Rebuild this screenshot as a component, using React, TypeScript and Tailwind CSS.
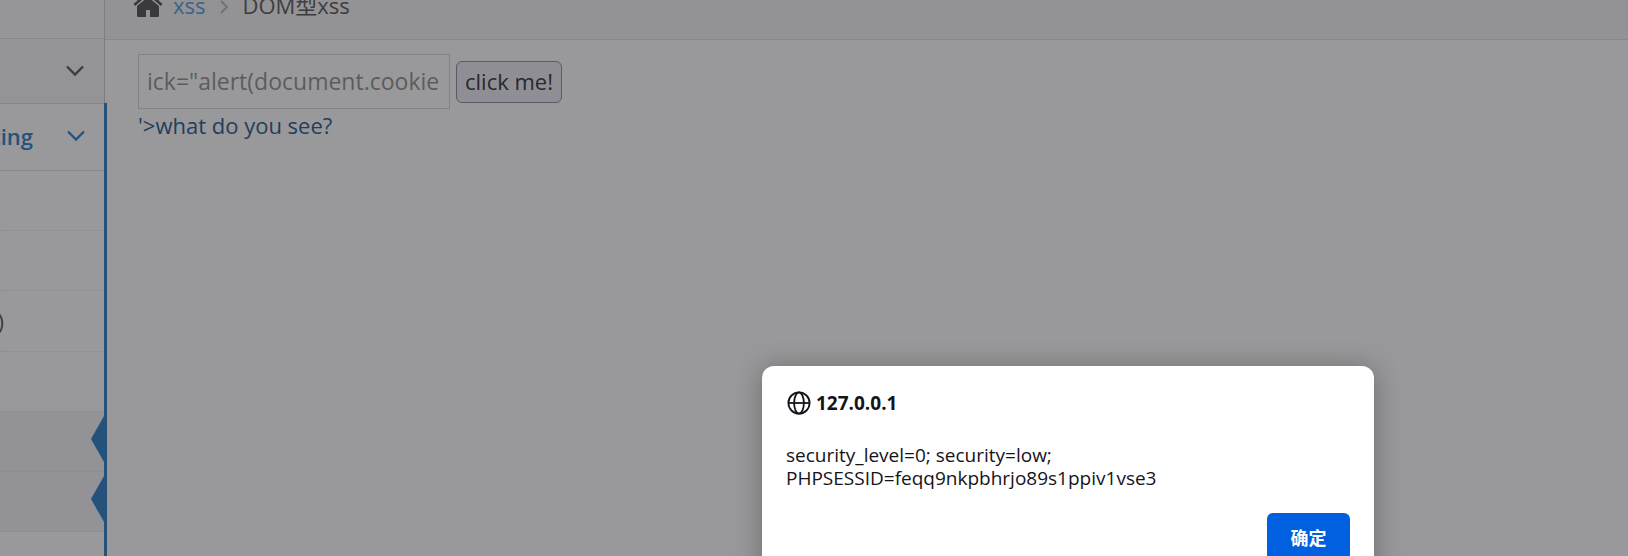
import React from "react";

function Chevron({ className }: { className: string }) {
  return (
    <svg viewBox="0 0 18 12" className={`h-3 w-[18px] shrink-0 ${className}`} fill="none" aria-hidden="true">
      <path d="M1 1.500 9 9.500 17 1.500" stroke="currentColor" strokeWidth="2.3" />
    </svg>
  );
}

function HomeIcon() {
  return (
    <svg viewBox="0 0 30 26" className="h-[26px] w-[30px] shrink-0" fill="#3a3a3c" aria-hidden="true">
      <path d="M15 0 21 5.200V2h4v6.800L29.500 13 28 15 15 4 2 15 .5 13Z" />
      <path d="M15 6 26 15v9.500a1.500 1.500 0 0 1-1.500 1.500H17v-7h-4v7H5.500A1.500 1.500 0 0 1 4 24.500V15Z" />
    </svg>
  );
}

function GlobeIcon() {
  return (
    <svg viewBox="0 0 24 24" className="size-6 shrink-0" fill="none" stroke="#15141a" strokeWidth="1.8" aria-hidden="true">
      <circle cx="12" cy="12" r="10.600" />
      <path d="M1.500 12h21" />
      <ellipse cx="12" cy="12" rx="4.900" ry="10.600" />
    </svg>
  );
}

const subItems = [
  { label: "", active: false },
  { label: "", active: false },
  { label: ")", active: false },
  { label: "", active: false },
  { label: "", active: true },
  { label: "", active: true },
  { label: "", active: false },
];

function Sidebar() {
  return (
    <nav className="flex w-[107px] shrink-0 flex-col overflow-hidden">
      <div className="mr-[2px] h-[39px] shrink-0 border-r border-b border-r-[#7d7d7f] border-b-[#88888a] bg-[#969698]" />
      <button
        type="button"
        aria-label="Expand section"
        className="mr-[2px] flex h-16 shrink-0 items-center justify-end border-r border-r-[#7d7d7f] bg-[#949496] pr-5"
      >
        <Chevron className="text-[#3b3b3d]" />
      </button>
      <div className="grow border-r-3 border-[#25527a]">
        <button
          type="button"
          className="flex h-[68px] w-full items-center justify-end gap-[34px] border-t border-b border-t-[#88888a] border-b-[#88888a] pr-[19px] pb-[2px] text-[22px] font-semibold text-[#25527a]"
        >
          <span>ting</span>
          <Chevron className="" />
        </button>
        <ul>
          {subItems.map((item, i) => (
            <li
              key={i}
              className={`relative h-[60px] border-b border-dotted border-[#8b8b8d] ${i === 2 ? "h-[61px]" : "h-[60px]"} ${item.active ? "bg-[#939297]" : ""}`}
            >
              <a href="#" className="flex h-full items-center justify-end pr-[100px] text-[22px] text-[#3b3b3d]">
                {item.label}
              </a>
              {item.active && (
                <svg viewBox="0 0 13 46" className="absolute top-1 right-0 h-[46px] w-[13px]" fill="#25527a" aria-hidden="true">
                  <path d="M13 0 0 23l13 23Z" />
                </svg>
              )}
            </li>
          ))}
        </ul>
      </div>
    </nav>
  );
}

export default function App() {
  return (
    <div className="relative flex h-screen overflow-hidden bg-[#99999b] font-['Open_Sans','Noto_Sans_CJK_SC',sans-serif]">
      <Sidebar />
      <main className="-ml-[2px] min-w-0 grow">
        <header className="flex h-10 items-end border-b border-[#88888a] bg-[#939395] pb-[22px] pl-7">
          <HomeIcon />
          <div className="ml-[10px] flex items-center text-[22px] leading-6 text-[#3d3d3f]">
            <a href="#" className="text-[#386388]">
              xss
            </a>
            <svg viewBox="0 0 8 14" className="mt-1 mr-[14px] ml-[15px] h-[14px] w-2" fill="none" aria-hidden="true">
              <path d="M1 1 7 7 1 13" stroke="#707073" strokeWidth="1.8" />
            </svg>
            <span>DOM型xss</span>
          </div>
        </header>
        <form className="flex items-center gap-[6px] pt-[14px] pl-[33px]" onSubmit={(e) => e.preventDefault()}>
          <input
            type="text"
            aria-label="Text"
            defaultValue={'ick="alert(document.cookie'}
            className="h-[55px] w-[312px] border border-[#828284] px-2 pb-[2px] text-[23px] text-[#5c5c5e]"
          />
          <button type="submit" className="h-[42px] w-[106px] rounded-md border border-[#5b5a66] bg-[#8f8e94] text-[22px] text-[#29292b]">
            click me!
          </button>
        </form>
        <a href="#" className="ml-[33px] block text-[22px] leading-8 text-[#223e5b]">
          '&gt;what do you see?
        </a>
      </main>

      <div className="absolute inset-0 flex justify-end pt-[366px] pr-[254px]">
        <section
          role="dialog"
          aria-labelledby="origin"
          className="flex h-[214px] w-[612px] shrink-0 flex-col rounded-xl bg-white p-6 text-[#15141a] shadow-[0_2px_28px_rgba(0,0,0,0.3)]"
        >
          <h1 id="origin" className="flex items-center gap-[5px] pl-px text-[19px] leading-[26px] font-bold">
            <GlobeIcon />
            127.0.0.1
          </h1>
          <p className="mt-7 text-[19px] leading-[23px]">
            security_level=0; security=low;
            <br />
            PHPSESSID=feqq9nkpbhrjo89s1ppiv1vse3
          </p>
          <button type="button" className="mt-[23px] h-[50px] w-[83px] shrink-0 self-end rounded-md bg-[#0060df] text-[18px] font-bold text-white">
            确定
          </button>
        </section>
      </div>
    </div>
  );
}
